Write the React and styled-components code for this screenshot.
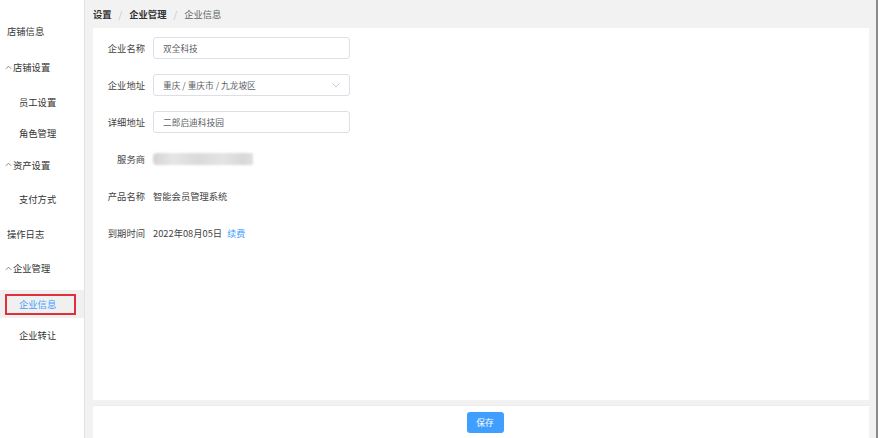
import styled, { createGlobalStyle } from "styled-components";

const GlobalStyle = createGlobalStyle`
  html, body {
    margin: 0;
    padding: 0;
    height: 100%;
    overflow: hidden;
  }
  body {
    font-family: "Noto Sans CJK SC", "Noto Sans", sans-serif;
    font-size: 9.3px;
    color: #333;
  }
  #root {
    height: 100%;
  }
`;

const Page = styled.div`
  display: flex;
  height: 438px;
  width: 878px;
`;

const Sidebar = styled.div`
  width: 85px;
  flex-shrink: 0;
  background: #fff;
  border-right: 1px solid #e2e2e2;
  padding-top: 14px;
  box-sizing: border-box;
`;

const MenuItem = styled.div`
  height: ${(props) => props.h || 34}px;
  display: flex;
  align-items: center;
  box-sizing: border-box;
  padding-left: ${(props) => (props.sub ? "19px" : props.group ? "5px" : "7px")};
  color: #333;
  font-size: 9.3px;
  white-space: nowrap;
`;

const ActiveItem = styled.div`
  height: 28px;
  margin: 4px 0 2px;
  display: flex;
  align-items: center;
  background: #f0f0f0;
  padding: 0 8px 0 5px;
`;

const ActiveBox = styled.div`
  flex: 1;
  height: 21px;
  border: 2px solid #e0303a;
  display: flex;
  align-items: center;
  padding-left: 12px;
  color: #409eff;
  font-size: 9.3px;
  box-sizing: border-box;
`;

const Caret = styled.svg`
  width: 7px;
  height: 7px;
  margin-right: 1px;
  flex-shrink: 0;
`;

const Main = styled.div`
  flex: 1;
  background: #f2f2f2;
  display: flex;
  flex-direction: column;
  padding: 0 7px 0 8px;
  min-width: 0;
`;

const Breadcrumb = styled.div`
  height: 28px;
  display: flex;
  align-items: center;
  font-size: 9.3px;
`;

const Crumb = styled.span`
  color: ${(props) => (props.last ? "#606266" : "#303133")};
  font-weight: ${(props) => (props.last ? 400 : 700)};
`;

const Sep = styled.span`
  color: #c0c4cc;
  margin: 0 7px;
`;

const Card = styled.div`
  flex: 1;
  background: #fff;
  padding-top: 9px;
  display: flex;
  flex-direction: column;
  gap: 15px;
`;

const Row = styled.div`
  display: flex;
  align-items: center;
  height: 22px;
`;

const Label = styled.div`
  width: 52px;
  text-align: right;
  margin-right: 8px;
  color: #444;
  font-size: 9.3px;
  white-space: nowrap;
`;

const Input = styled.div`
  width: 197px;
  height: 22px;
  box-sizing: border-box;
  border: 1px solid #dcdfe6;
  border-radius: 3px;
  padding: 0 9px;
  display: flex;
  align-items: center;
  justify-content: space-between;
  color: #606266;
  font-size: 8.7px;
`;

const Value = styled.span`
  color: #444;
  font-size: 9.3px;
`;

const Link = styled.span`
  color: #409eff;
  margin-left: 5px;
  font-size: 9px;
`;

const Blurred = styled.div`
  width: 100px;
  height: 12px;
  border-radius: 4px 0 0 4px;
  background: linear-gradient(90deg, #d4d4d4, #e6e6e6 20%, #dadada 45%, #e4e4e4 70%, #d8d8d8 90%, #e0e0e0);
  filter: blur(1px);
`;

const Footer = styled.div`
  height: 33px;
  margin-top: 5px;
  background: #fff;
  border-top: 1px solid #ececec;
  box-sizing: border-box;
  display: flex;
  align-items: center;
  justify-content: center;
`;

const SaveButton = styled.button`
  width: 37px;
  height: 21px;
  margin-left: 8px;
  border: none;
  border-radius: 3px;
  background: #409eff;
  color: #fff;
  font-family: inherit;
  font-size: 8.7px;
  padding: 0;
`;

const Scrollbar = styled.div`
  width: 2px;
  background: #8a8a8a;
  flex-shrink: 0;
`;

const Chevron = () => (
  <Caret viewBox="0 0 8 8">
    <path d="M1 5.5 L4 2.5 L7 5.5" fill="none" stroke="#666" strokeWidth="0.9" />
  </Caret>
);

const DownArrow = () => (
  <svg width="8" height="5" viewBox="0 0 8 5">
    <path d="M0.5 0.5 L4 4 L7.5 0.5" fill="none" stroke="#c0c4cc" strokeWidth="0.9" />
  </svg>
);

const App = () => {
  return (
    <Page>
      <GlobalStyle />
      <Sidebar>
        <MenuItem h={34}>店铺信息</MenuItem>
        <MenuItem group h={38}>
          <Chevron />
          店铺设置
        </MenuItem>
        <MenuItem sub h={31}>员工设置</MenuItem>
        <MenuItem sub h={31}>角色管理</MenuItem>
        <MenuItem group h={33}>
          <Chevron />
          资产设置
        </MenuItem>
        <MenuItem sub h={36}>支付方式</MenuItem>
        <MenuItem h={33}>操作日志</MenuItem>
        <MenuItem group h={36}>
          <Chevron />
          企业管理
        </MenuItem>
        <ActiveItem>
          <ActiveBox>企业信息</ActiveBox>
        </ActiveItem>
        <MenuItem sub h={30}>企业转让</MenuItem>
      </Sidebar>
      <Main>
        <Breadcrumb>
          <Crumb>设置</Crumb>
          <Sep>/</Sep>
          <Crumb>企业管理</Crumb>
          <Sep>/</Sep>
          <Crumb last>企业信息</Crumb>
        </Breadcrumb>
        <Card>
          <Row>
            <Label>企业名称</Label>
            <Input>双全科技</Input>
          </Row>
          <Row>
            <Label>企业地址</Label>
            <Input>
              重庆 / 重庆市 / 九龙坡区
              <DownArrow />
            </Input>
          </Row>
          <Row>
            <Label>详细地址</Label>
            <Input>二郎启迪科技园</Input>
          </Row>
          <Row>
            <Label>服务商</Label>
            <Blurred />
          </Row>
          <Row>
            <Label>产品名称</Label>
            <Value>智能会员管理系统</Value>
          </Row>
          <Row>
            <Label>到期时间</Label>
            <Value>2022年08月05日</Value>
            <Link>续费</Link>
          </Row>
        </Card>
        <Footer>
          <SaveButton>保存</SaveButton>
        </Footer>
      </Main>
      <Scrollbar />
    </Page>
  );
};

export default App;
